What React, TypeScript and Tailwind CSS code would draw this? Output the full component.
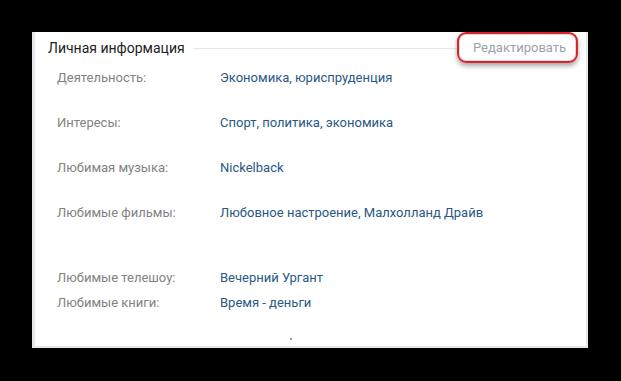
import React from "react";

const rows = [
  { label: "Деятельность:", value: "Экономика, юриспруденция", gap: "mt-[5px]" },
  { label: "Интересы:", value: "Спорт, политика, экономика", gap: "mt-[29px]" },
  { label: "Любимая музыка:", value: "Nickelback", gap: "mt-[29px]" },
  { label: "Любимые фильмы:", value: "Любовное настроение, Малхолланд Драйв", gap: "mt-[29px]" },
  { label: "Любимые телешоу:", value: "Вечерний Ургант", gap: "mt-[49px]" },
  { label: "Любимые книги:", value: "Время - деньги", gap: "mt-[9px]" },
];

const InfoRow = ({ label, value, gap }: { label: string; value: string; gap: string }) => (
  <div className={`flex h-[16px] items-center leading-[16px] ${gap}`}>
    <span className="w-[163px] shrink-0 text-[#828282]">{label}</span>
    <span className="text-[#2a5885]">{value}</span>
  </div>
);

export default function App() {
  return (
    <div className="w-[621px] h-[381px] bg-black pt-[32px] pl-[32px] font-['Roboto','Liberation_Sans',sans-serif] text-[13px]">
      <div className="w-[556px] h-[316px] bg-white border-l-[3px] border-r-[2px] border-b-[2px] border-[#e7e8ec] flex flex-col">
        {/* Header */}
        <div className="flex items-center h-[33px] pl-[13px] pr-[8px]">
          <span className="text-[#222] text-[14px]">Личная информация</span>
          <div className="flex-1 h-px bg-[#e7e8ec] ml-[8px]" />
          <div className="h-[31px] -mt-[2px] w-[121px] flex items-center pl-[14px] rounded-[9px] border-2 border-[#d9232d] shadow-[0_3px_5px_rgba(0,0,0,0.35),inset_0_0_0_1px_#d8d8d8] text-[#9aa2ac]">
            Редактировать
          </div>
        </div>

        {/* Rows */}
        <div className="pl-[22px]">
          {rows.map((r) => (
            <InfoRow key={r.label} label={r.label} value={r.value} gap={r.gap} />
          ))}
        </div>

        <div className="mt-[27px] ml-[255px] w-[2px] h-[2px] bg-[#9a9a9a]" />
      </div>
    </div>
  );
}
